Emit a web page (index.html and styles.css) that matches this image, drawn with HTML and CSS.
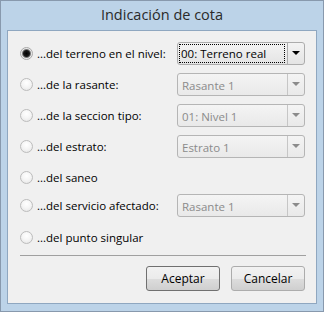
FILE: index.html
```html
<!DOCTYPE html>
<html lang="es">
<head>
  <meta charset="UTF-8">
  <title>Indicación de cota</title>
  <link rel="stylesheet" href="styles.css">
</head>
<body>

<div class="window">
  <div class="titlebar">Indicación de cota</div>

  <div class="panel">
    <div class="row">
      <label class="opt"><input type="radio" name="cota" checked> ...del terreno en el nivel:</label>
      <div class="combo">
        <span class="value focus">00: Terreno real</span>
        <span class="arrow"></span>
      </div>
    </div>

    <div class="row">
      <label class="opt"><input type="radio" name="cota"> ...de la rasante:</label>
      <div class="combo disabled">
        <span class="value">Rasante 1</span>
        <span class="arrow"></span>
      </div>
    </div>

    <div class="row">
      <label class="opt"><input type="radio" name="cota"> ...de la seccion tipo:</label>
      <div class="combo disabled">
        <span class="value">01: Nivel 1</span>
        <span class="arrow"></span>
      </div>
    </div>

    <div class="row">
      <label class="opt"><input type="radio" name="cota"> ...del estrato:</label>
      <div class="combo disabled">
        <span class="value">Estrato 1</span>
        <span class="arrow"></span>
      </div>
    </div>

    <div class="row short">
      <label class="opt"><input type="radio" name="cota"> ...del saneo</label>
    </div>

    <div class="row tight">
      <label class="opt"><input type="radio" name="cota"> ...del servicio afectado:</label>
      <div class="combo disabled">
        <span class="value">Rasante 1</span>
        <span class="arrow"></span>
      </div>
    </div>

    <div class="row short last">
      <label class="opt"><input type="radio" name="cota"> ...del punto singular</label>
    </div>

    <div class="separator"></div>

    <div class="actions">
      <button class="default">Aceptar</button>
      <button>Cancelar</button>
    </div>
  </div>
</div>

</body>
</html>
```

FILE: styles.css
```css
body {
  margin: 0;
  padding: 0;
  font-family: "Open Sans", "Noto Sans", sans-serif;
  font-size: 11.5px;
  background: #fff;
}
.window {
  width: 322px;
  height: 310px;
  border: 1px solid #8899ad;
  background: #bcd3e8;
}
.titlebar {
  height: 29px;
  line-height: 28px;
  text-align: center;
  font-size: 14.5px;
  color: #2a2a2a;
}
.panel {
  margin: 0 6px;
  height: 274px;
  border: 1px solid #8fa7c0;
  background: #f0f0f0;
  padding: 11px 11px 0 12px;
  box-sizing: border-box;
}
.row {
  display: flex;
  align-items: center;
  justify-content: space-between;
  height: 23px;
  margin-bottom: 8px;
}
.row.short {
  height: 22px;
  margin-bottom: 6px;
}
.row.tight {
  margin-bottom: 9px;
}
.row.last {
  margin-bottom: 7px;
}
.opt {
  display: flex;
  align-items: center;
  gap: 4px;
  color: #000;
}
.opt input {
  appearance: none;
  -webkit-appearance: none;
  margin: 0;
  width: 13px;
  height: 13px;
  border-radius: 50%;
  border: 1px solid #bcbcbc;
  background: radial-gradient(circle at 50% 35%, #ffffff 0%, #f4f4f4 50%, #e2e2e2 100%);
  box-sizing: border-box;
}
.opt input:checked {
  border-color: #a8a8a8;
  background: radial-gradient(circle, #000 0, #1a1a1a 3px, #7a7a7a 4px, #e8e8e8 5px, #f6f6f6 100%);
}
.combo {
  display: flex;
  width: 128px;
  height: 23px;
  border: 1px solid #acacac;
  border-radius: 3px;
  box-sizing: border-box;
  background: linear-gradient(#f3f3f3, #e4e4e4);
  color: #000;
}
.combo .value {
  flex: 1;
  margin: 2px;
  padding-left: 1px;
  line-height: 17px;
  border: 1px dotted transparent;
}
.combo .value.focus {
  border-color: #000;
  margin: 1px 2px 1px 1px;
}
.combo .arrow {
  width: 16px;
  border-left: 1px solid #acacac;
  position: relative;
}
.combo .arrow::after {
  content: "";
  position: absolute;
  left: 4px;
  top: 8px;
  border-left: 4px solid transparent;
  border-right: 4px solid transparent;
  border-top: 4px solid #000;
}
.combo.disabled {
  color: #8b8b8b;
  border-color: #b5b5b5;
  background: linear-gradient(#f4f4f4, #e9e9e9);
}
.combo.disabled .arrow {
  border-left-color: #c6c6c6;
}
.combo.disabled .arrow::after {
  border-top-color: #8b8b8b;
}
.separator {
  height: 1px;
  background: #a0a0a0;
  margin: 0 -1px 0 0;
}
.actions {
  display: flex;
  justify-content: flex-end;
  gap: 11px;
  margin-top: 10px;
}
.actions button {
  width: 74px;
  height: 25px;
  padding: 0;
  font-family: inherit;
  font-size: 12px;
  color: #000;
  border: 1px solid #acacac;
  border-radius: 3px;
  background: linear-gradient(#f2f2f2 0%, #ebebeb 50%, #dddddd 51%, #cfcfcf 100%);
}
.actions button.default {
  border-color: #707070;
}
```
